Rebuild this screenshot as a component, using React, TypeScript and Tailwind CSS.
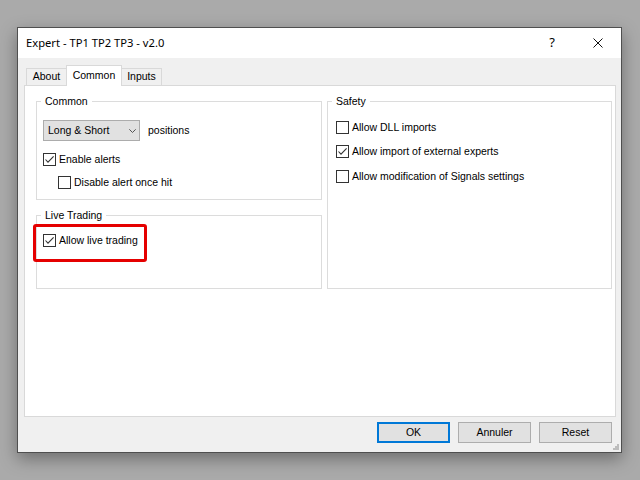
import React from "react";

const FONT = { fontFamily: '"Liberation Sans", Arial, sans-serif' };

function Box({ checked }: { checked?: boolean }) {
  return (
    <span className="w-[13px] h-[13px] border border-[#333333] bg-white flex items-center justify-center shrink-0">
      {checked && (
        <svg width="11" height="11" viewBox="0 0 11 11">
          <path d="M1.5 5.5 L4 8.2 L9.6 2.3" stroke="#333333" strokeWidth="1.1" fill="none" />
        </svg>
      )}
    </span>
  );
}

function CheckRow({ label, checked, className = "" }: { label: string; checked?: boolean; className?: string }) {
  return (
    <div className={"flex items-center gap-[3px] h-[13px] " + className}>
      <Box checked={checked} />
      <span className="leading-[13px] whitespace-nowrap">{label}</span>
    </div>
  );
}

export default function App() {
  return (
    <div className="w-[640px] h-[480px] bg-[#aaaaaa] overflow-hidden pt-[27px] pl-[17px] text-[10.5px] text-black" style={FONT}>
      <div className="relative w-[605px] h-[426px] border border-[#4f4f4f] bg-[#f0f0f0] flex flex-col shadow-[0_6px_16px_rgba(0,0,0,0.35)]">
        {/* Title bar */}
        <div className="h-[30px] bg-white flex items-center shrink-0">
          <span className="pl-[8px] text-[11.2px] whitespace-nowrap" style={{ fontFamily: '"Noto Sans", "Open Sans", sans-serif' }}>
            Expert - TP1 TP2 TP3 - v2.0
          </span>
          <div className="ml-auto flex h-full">
            <div className="w-[46px] h-full flex items-center justify-center text-[13px]" style={{ fontFamily: '"Noto Sans", sans-serif' }}>
              ?
            </div>
            <div className="w-[46px] h-full flex items-center justify-center">
              <svg width="10" height="10" viewBox="0 0 10 10">
                <path d="M0.5 0.5 L9.5 9.5 M9.5 0.5 L0.5 9.5" stroke="#111" strokeWidth="1" />
              </svg>
            </div>
          </div>
        </div>

        {/* Body */}
        <div className="flex-1 flex flex-col pl-[6px] pr-[5px]">
          {/* Tabs */}
          <div className="mt-[7px] h-[21px] -mb-px flex items-end pl-[2px] relative z-10">
            <div className="w-[40px] h-[17px] mb-px border-l border-t border-[#d9d9d9] bg-[#f0f0f0] flex items-center justify-center">
              About
            </div>
            <div className="w-[56px] h-[21px] border-l border-t border-r border-[#d9d9d9] bg-white flex items-center justify-center pb-[1px]">
              Common
            </div>
            <div className="w-[40px] h-[17px] mb-px border-t border-r border-[#d9d9d9] bg-[#f0f0f0] flex items-center justify-center">
              Inputs
            </div>
          </div>

          {/* Panel */}
          <div className="h-[332px] border border-[#d9d9d9] bg-white pt-[9px] pl-[11px]">
            <div className="flex gap-[5px]">
              {/* Left column */}
              <div className="w-[286px] flex flex-col">
                <fieldset className="border border-[#dcdcdc]">
                  <legend className="ml-[4px] px-[4px] leading-[13px]">Common</legend>
                  <div className="pl-[6px] pt-[12px] pb-[10px]">
                    <div className="flex items-center h-[21px]">
                      <div className="w-[97px] h-[21px] border border-[#acacac] bg-[#e1e1e1] flex items-center pl-[4px] pr-[3px]">
                        <span className="whitespace-nowrap">Long &amp; Short</span>
                        <svg className="ml-auto" width="7" height="4" viewBox="0 0 7 4">
                          <path d="M0.3 0.3 L3.5 3.5 L6.7 0.3" stroke="#555" strokeWidth="1" fill="none" />
                        </svg>
                      </div>
                      <span className="ml-[8px]">positions</span>
                    </div>
                    <CheckRow label="Enable alerts" checked className="mt-[12px]" />
                    <CheckRow label="Disable alert once hit" className="mt-[10px] ml-[15px]" />
                  </div>
                </fieldset>

                <fieldset className="mt-[9px] border border-[#dcdcdc]">
                  <legend className="ml-[4px] px-[4px] leading-[13px]">Live Trading</legend>
                  <div className="pl-[6px] pt-[12px] pb-[41px]">
                    <div className="relative">
                      <CheckRow label="Allow live trading" checked />
                      <div className="absolute left-[-10px] top-[-10px] w-[114px] h-[38px] border-[3.5px] border-[#e50000] rounded-[3px] pointer-events-none" />
                    </div>
                  </div>
                </fieldset>
              </div>

              {/* Safety */}
              <fieldset className="w-[285px] border border-[#dcdcdc]">
                <legend className="ml-[4px] px-[4px] leading-[13px]">Safety</legend>
                <div className="pl-[8px] pt-[13px]">
                  <CheckRow label="Allow DLL imports" />
                  <CheckRow label="Allow import of external experts" checked className="mt-[11px]" />
                  <CheckRow label="Allow modification of Signals settings" className="mt-[12px]" />
                </div>
              </fieldset>
            </div>
          </div>

          {/* Buttons */}
          <div className="mt-[5px] flex justify-end gap-[8px] pr-[4px]">
            <div className="w-[73px] h-[21px] border-2 border-[#0078d7] bg-[#e1e1e1] flex items-center justify-center">OK</div>
            <div className="w-[73px] h-[21px] border border-[#adadad] bg-[#e1e1e1] flex items-center justify-center">Annuler</div>
            <div className="w-[73px] h-[21px] border border-[#adadad] bg-[#e1e1e1] flex items-center justify-center">Reset</div>
          </div>
        </div>

        {/* Resize grip */}
        <svg className="absolute right-[2px] bottom-[2px]" width="7" height="7" viewBox="0 0 7 7">
          <rect x="5" y="1" width="2" height="2" fill="#bdbdbd" />
          <rect x="3" y="3" width="2" height="2" fill="#bdbdbd" />
          <rect x="5" y="3" width="2" height="2" fill="#bdbdbd" />
          <rect x="1" y="5" width="2" height="2" fill="#bdbdbd" />
          <rect x="3" y="5" width="2" height="2" fill="#bdbdbd" />
          <rect x="5" y="5" width="2" height="2" fill="#bdbdbd" />
        </svg>
      </div>
    </div>
  );
}
